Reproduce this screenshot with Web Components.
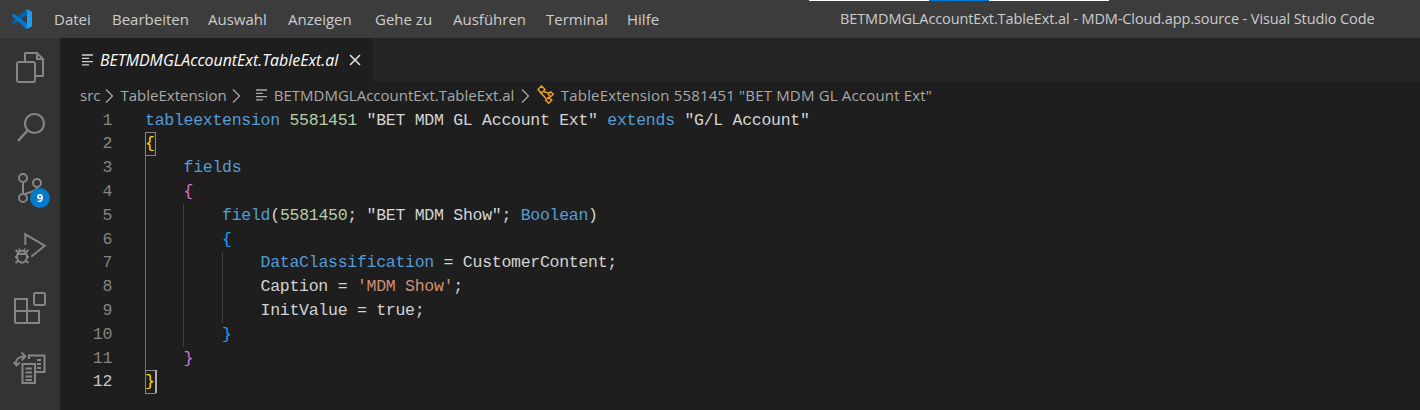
<!DOCTYPE html>
<html lang="de">
<head>
<meta charset="utf-8">
<title>Visual Studio Code</title>
<style>
  html, body { margin: 0; height: 100%; background: #1e1e1e; overflow: hidden; }
  body { font-family: "Open Sans", "Noto Sans", sans-serif; }
</style>
</head>
<body>
<vs-window>
  <vs-titlebar slot="title" title-text="BETMDMGLAccountExt.TableExt.al - MDM-Cloud.app.source - Visual Studio Code"></vs-titlebar>
  <vs-activitybar slot="activity"></vs-activitybar>
  <vs-tabs slot="tabs" name="BETMDMGLAccountExt.TableExt.al"></vs-tabs>
  <vs-breadcrumbs slot="crumbs"></vs-breadcrumbs>
  <vs-editor slot="editor"></vs-editor>
</vs-window>

<script>
const UI_FONT = '"Open Sans", "Noto Sans", sans-serif';
const FILE_ICON = `<svg width="11" height="12" viewBox="0 0 11 12" fill="none" stroke="currentColor" stroke-width="1.3"><path d="M0 1h11M0 4.300h7M0 7.600h11M0 10.900h7"/></svg>`;
const CHEVRON = `<svg width="9" height="16" viewBox="0 0 9 16" fill="none" stroke="currentColor" stroke-width="1.2"><path d="M1 1.500l6.500 6.500L1 14.500"/></svg>`;

class VsWindow extends HTMLElement {
  constructor() {
    super();
    this.attachShadow({ mode: 'open' }).innerHTML = `
      <style>
        :host { display: grid; grid-template: 38px 1fr / 60px 1fr; width: 1420px; height: 410px; overflow: hidden; }
        .title { grid-column: 1 / 3; }
        .main { display: flex; flex-direction: column; min-width: 0; background: #1e1e1e; }
      </style>
      <div class="title"><slot name="title"></slot></div>
      <slot name="activity"></slot>
      <div class="main">
        <slot name="tabs"></slot>
        <slot name="crumbs"></slot>
        <slot name="editor"></slot>
      </div>`;
  }
}

class VsTitlebar extends HTMLElement {
  connectedCallback() {
    // menu label + the width its slot takes up in the bar
    const menus = [['Datei', 58], ['Bearbeiten', 96], ['Auswahl', 80], ['Anzeigen', 87], ['Gehe zu', 78], ['Ausführen', 93], ['Terminal', 81], ['Hilfe', 40]];
    this.attachShadow({ mode: 'open' }).innerHTML = `
      <style>
        :host { display: flex; align-items: center; position: relative; height: 38px; background: #3c3c3c; color: #cccccc; font: 15px ${UI_FONT}; }
        svg.logo { width: 20px; height: 20px; margin-left: 12px; flex: none; }
        nav { display: flex; margin-left: 22px; }
        .name { position: absolute; left: 840px; top: 9px; line-height: 20px; white-space: nowrap; font-size: 14.500px; letter-spacing: -0.1px; }
        .strip { position: absolute; left: 809px; top: 0; width: 300px; height: 1px; background: linear-gradient(90deg, #fff 120px, #0078d4 120px 180px, #fff 180px); }
      </style>
      <svg class="logo" viewBox="0 0 100 100">
        <path fill="#0065A9" d="M96.46 10.8 75.86.88a6.23 6.23 0 0 0-7.11 1.21L1.3 63.58a4.17 4.17 0 0 0 0 6.16l5.51 5.01a4.17 4.17 0 0 0 5.32.24L93.36 13.37c2.73-2.07 6.64-.13 6.64 3.3v-.24a6.25 6.25 0 0 0-3.54-5.63z"/>
        <path fill="#007ACC" d="M96.46 89.2 75.86 99.12a6.23 6.23 0 0 1-7.11-1.21L1.3 36.42a4.17 4.17 0 0 1 0-6.16l5.51-5.01a4.17 4.17 0 0 1 5.32-.24l81.23 61.62c2.73 2.07 6.64.13 6.64-3.3v.24a6.25 6.25 0 0 1-3.54 5.63z"/>
        <path fill="#1F9CF0" d="M75.86 99.13a6.23 6.23 0 0 1-7.11-1.21c2.31 2.31 6.25.67 6.25-2.58V4.66c0-3.26-3.94-4.89-6.25-2.58a6.23 6.23 0 0 1 7.11-1.21l20.6 9.91A6.25 6.25 0 0 1 100 16.41v67.18a6.25 6.25 0 0 1-3.54 5.63z"/>
      </svg>
      <nav>${menus.map(([m, w]) => `<span style="width:${w}px">${m}</span>`).join('')}</nav>
      <span class="name">${this.getAttribute('title-text')}</span>
      <div class="strip"></div>`;
  }
}

class VsActivitybar extends HTMLElement {
  constructor() {
    super();
    this.attachShadow({ mode: 'open' }).innerHTML = `
      <style>
        :host { display: flex; flex-direction: column; align-items: center; background: #333333; color: #858585; }
        .item { position: relative; width: 60px; height: 60px; flex: none; display: flex; align-items: center; justify-content: center; }
        svg { width: 36px; height: 36px; fill: none; stroke: currentColor; stroke-width: 2; }
        .badge { position: absolute; left: 30px; top: 30px; width: 20px; height: 20px; border-radius: 50%; background: #007acc; color: #fff; font: 700 11px/20px ${UI_FONT}; text-align: center; }
      </style>
      <div class="item"><svg viewBox="0 0 36 36">
        <path d="M13 12V3.500a.5.5 0 0 1 .5-.5H25l6 6v16.500a.5.5 0 0 1-.5.5H23"/><path d="M25 3v6h6"/>
        <rect x="5" y="12" width="18" height="20" rx="2"/>
      </svg></div>
      <div class="item"><svg viewBox="0 0 36 36">
        <circle cx="22.500" cy="13.500" r="9.500" stroke-width="2.200"/><path d="M15.500 20.500 6 31" stroke-width="2.600"/>
      </svg></div>
      <div class="item"><svg viewBox="0 0 36 36">
        <circle cx="11" cy="8" r="4"/><circle cx="25" cy="13" r="4"/><circle cx="11" cy="28" r="4"/>
        <path d="M11 12v12M25 17c0 4-6 5-9 6-2 .5-3 1-4 1.500"/>
      </svg><span class="badge">9</span></div>
      <div class="item"><svg viewBox="0 0 36 36">
        <path d="M13.300 15V4.300L32.700 15.700 19.300 26.700"/>
        <ellipse cx="10" cy="26.700" rx="5" ry="6"/><path d="M5 24h10M3.500 20l3 2.500M16.500 20l-3 2.500M3 27h2M15 27h2M3.500 33l3-2.500M16.500 33l-3-2.500M7 18.500l1 2.500M13 18.500l-1 2.500"/>
      </svg></div>
      <div class="item"><svg viewBox="0 0 36 36">
        <path d="M3 9h12v12h12v12H4a1 1 0 0 1-1-1zM3 21h12v12"/>
        <rect x="22" y="3" width="11" height="12" rx="1.500"/>
      </svg></div>
      <div class="item"><svg viewBox="0 0 36 36">
        <rect x="10.500" y="14" width="12.500" height="19"/>
        <path d="M13.500 18.500h6.500M13.500 22.500h6.500M13.500 26.500h6.500M13.500 30h6.500"/>
        <path d="M17 9V5.500h15.500V22H24M25 10h4M25 14h4M25 18h4"/>
        <path d="M4.500 15c-1.500-5 1-8.500 9-8.500M9.500 2.500l4 4-4 4M1.500 12l3 3.500 3.500-3" stroke-width="1.800"/>
      </svg></div>`;
  }
}

class VsTabs extends HTMLElement {
  connectedCallback() {
    this.attachShadow({ mode: 'open' }).innerHTML = `
      <style>
        :host { display: flex; height: 43px; background: #252526; flex: none; }
        .tab { display: flex; align-items: center; width: 313px; background: #1e1e1e; color: #ffffff; box-sizing: border-box; padding: 0 0 0 22px; font: italic 15.900px ${UI_FONT}; }
        .name { margin-left: 7px; white-space: nowrap; }
        svg.x { margin-left: auto; margin-right: 12px; }
        svg { flex: none; color: #d0d0d0; }
      </style>
      <div class="tab">${FILE_ICON}<span class="name">${this.getAttribute('name')}</span>
        <svg class="x" width="12" height="12" viewBox="0 0 12 12" stroke="#e6e6e6" stroke-width="1.500"><path d="M1 1l10 10M11 1 1 11"/></svg>
      </div>`;
  }
}

class VsBreadcrumbs extends HTMLElement {
  constructor() {
    super();
    this.attachShadow({ mode: 'open' }).innerHTML = `
      <style>
        :host { display: flex; align-items: center; height: 22px; padding-left: 20px; flex: none; margin-top: 3px; color: #a9a9a9; font: 15px/22px ${UI_FONT}; white-space: nowrap; }
        svg { flex: none; }
        .chev { display: flex; margin: 1px 5px 0 5px; }
        .file { display: flex; margin: 0 7px 0 10px; }
        .sym { margin: -1px 5.500px 0 0; }
        .wide { letter-spacing: 0.18px; }
      </style>
      <span>src</span><span class="chev" style="margin-right:6px">${CHEVRON}</span><span>TableExtension</span><span class="chev">${CHEVRON}</span>
      <span class="file">${FILE_ICON}</span><span>BETMDMGLAccountExt.TableExt.al</span><span class="chev" style="margin-left:7px">${CHEVRON}</span>
      <svg class="sym" width="20" height="20" viewBox="0 0 20 20" fill="none" stroke="#ee9d28" stroke-width="1.500">
        <path d="M6.500 1 10 4.500 6.500 8 3 4.500zM13.700 12.300l3 3-3 3-3-3zM15.700 6.800l2.500 2.500-2.500 2.500-2.500-2.500z"/>
        <path d="M8.800 6.800 14 8M4.500 6.500 11 13.500"/>
      </svg><span class="wide">TableExtension 5581451 "BET MDM GL Account Ext"</span>`;
  }
}

class CodeLine extends HTMLElement {
  constructor() {
    super();
    this.attachShadow({ mode: 'open' }).innerHTML = `
      <style>
        :host { display: flex; height: 23.800px; line-height: 23.800px; }
        .no { width: 52.500px; text-align: right; color: #858585; flex: none; letter-spacing: 0; }
        :host([active]) .no { color: #c6c6c6; }
        pre { margin: 0 0 0 32.500px; font: inherit; letter-spacing: inherit; white-space: pre; color: #d4d4d4; }
      </style>
      <span class="no"></span><pre><slot></slot></pre>`;
  }
  connectedCallback() {
    this.shadowRoot.querySelector('.no').textContent = this.getAttribute('n');
  }
}
customElements.define('code-line', CodeLine);

class VsEditor extends HTMLElement {
  constructor() {
    super();
    const K = s => `<b style="color:#569cd6;font-weight:400">${s}</b>`;
    const N = s => `<b style="color:#b5cea8;font-weight:400">${s}</b>`;
    const S = s => `<b style="color:#ce9178;font-weight:400">${s}</b>`;
    const B = (s, c) => `<b style="color:${c};font-weight:400">${s}</b>`;
    const rows = [
      `${K('tableextension')} ${N('5581451')} "BET MDM GL Account Ext" ${K('extends')} "G/L Account"`,
      B('{', '#ffd700'),
      `    ${K('fields')}`,
      `    ${B('{', '#da70d6')}`,
      `        ${K('field')}(${N('5581450')}; "BET MDM Show"; ${K('Boolean')})`,
      `        ${B('{', '#179fff')}`,
      `            ${K('DataClassification')} = CustomerContent;`,
      `            Caption = ${S("'MDM Show'")};`,
      `            InitValue = true;`,
      `        ${B('}', '#179fff')}`,
      `    ${B('}', '#da70d6')}`,
      B('}', '#ffd700')
    ];
    this.attachShadow({ mode: 'open' }).innerHTML = `
      <style>
        :host { display: block; position: relative; flex: 1; padding-top: 2.700px; font: 16.500px "Liberation Mono", monospace; letter-spacing: -0.27px; }
        .guide { position: absolute; width: 1px; }
        .box { position: absolute; left: 85px; width: 9px; height: 22px; border: 1px solid #888; }
        .cursor { position: absolute; left: 95px; top: 264px; width: 2px; height: 23px; background: #aeafad; }
      </style>
      <div class="guide" style="left:85px;top:26px;height:238px;background:#707070"></div>
      <div class="guide" style="left:123px;top:98px;height:143px;background:#404040"></div>
      <div class="guide" style="left:162px;top:146px;height:71px;background:#404040"></div>
      <div class="box" style="top:26px"></div>
      <div class="box" style="top:264px"></div>
      <div class="cursor"></div>
      ${rows.map((r, i) => `<code-line n="${i + 1}"${i === 11 ? ' active' : ''}>${r}</code-line>`).join('')}`;
  }
}

customElements.define('vs-window', VsWindow);
customElements.define('vs-titlebar', VsTitlebar);
customElements.define('vs-activitybar', VsActivitybar);
customElements.define('vs-tabs', VsTabs);
customElements.define('vs-breadcrumbs', VsBreadcrumbs);
customElements.define('vs-editor', VsEditor);
</script>
</body>
</html>
